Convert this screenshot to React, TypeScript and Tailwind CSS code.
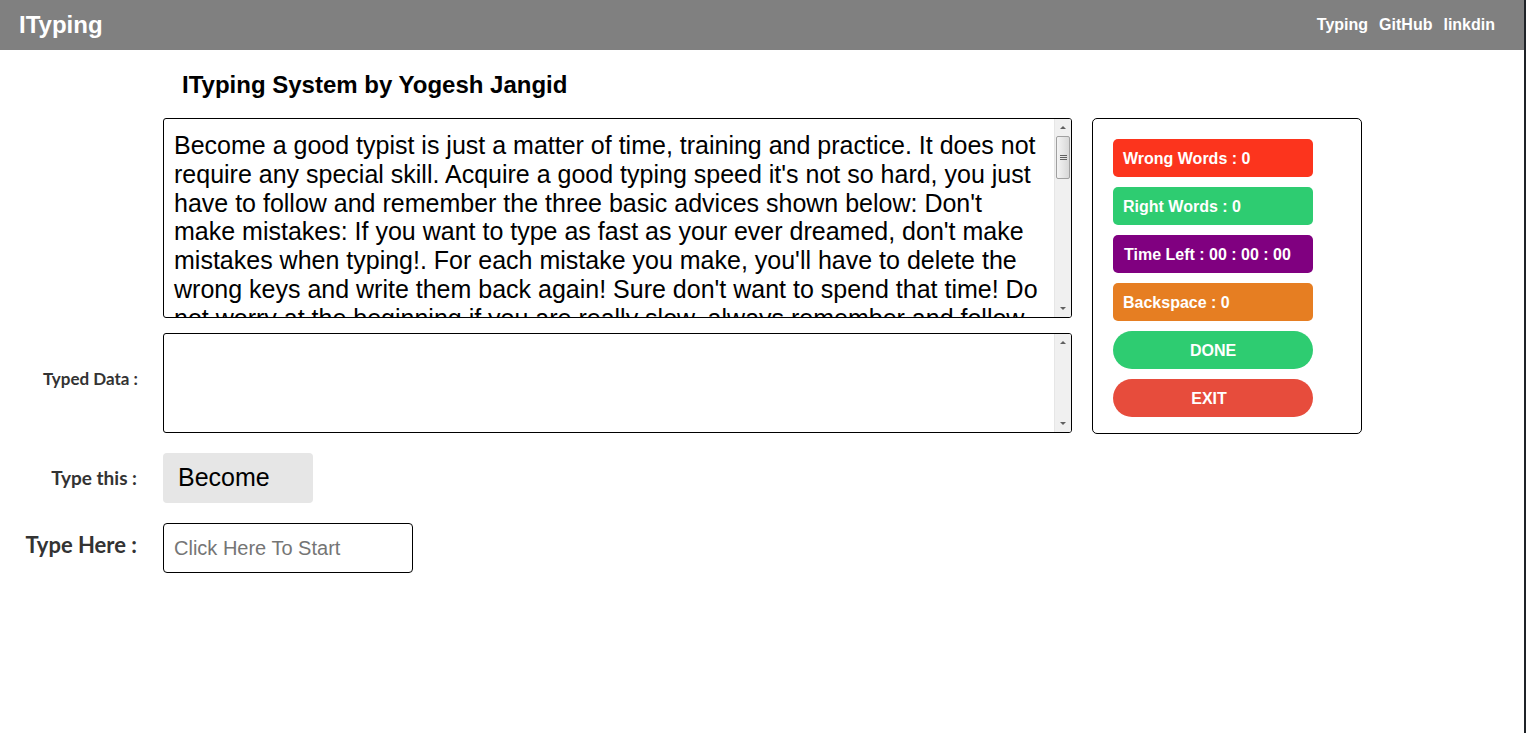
import React from "react";

const passage =
  "Become a good typist is just a matter of time, training and practice. It does not require any special skill. Acquire a good typing speed it's not so hard, you just have to follow and remember the three basic advices shown below: Don't make mistakes: If you want to type as fast as your ever dreamed, don't make mistakes when typing!. For each mistake you make, you'll have to delete the wrong keys and write them back again! Sure don't want to spend that time! Do not worry at the beginning if you are really slow, always remember and follow the rules.";

// old-style windows scrollbar, drawn by hand
const FakeScrollbar = ({ thumb }: { thumb: boolean }) => (
  <div className="flex flex-col w-[17px] h-full bg-[#f0f0f0] border-l border-[#e6e6e6]">
    <div className="h-[17px] flex items-center justify-center">
      <div className="w-0 h-0 border-l-[3px] border-r-[3px] border-b-[3px] border-l-transparent border-r-transparent border-b-[#606060]" />
    </div>
    {thumb && (
      <div className="mx-[1px] h-[43px] rounded-[2px] border border-[#a0a0a0] bg-gradient-to-r from-[#f4f4f4] to-[#d8d8d8] flex flex-col items-center justify-center gap-[1px]">
        <div className="w-[7px] h-[1px] bg-[#606060]" />
        <div className="w-[7px] h-[1px] bg-[#606060]" />
        <div className="w-[7px] h-[1px] bg-[#606060]" />
      </div>
    )}
    <div className="flex-1" />
    <div className="h-[17px] flex items-center justify-center">
      <div className="w-0 h-0 border-l-[3px] border-r-[3px] border-t-[3px] border-l-transparent border-r-transparent border-t-[#606060]" />
    </div>
  </div>
);

const stats = [
  { label: "Wrong Words : 0", bg: "bg-[#fc341d]", pad: "pl-[10px]" },
  { label: "Right Words : 0", bg: "bg-[#2ecc71]", pad: "pl-[10px]" },
  { label: "Time Left : 00 : 00 : 00", bg: "bg-[#800080]", pad: "pl-[11px]" },
  { label: "Backspace : 0", bg: "bg-[#e67e22]", pad: "pl-[10px]" },
];

export default function App() {
  return (
    <div className="min-h-[733px] bg-white border-r-2 border-[#1f2328] font-['Liberation_Sans',Arial,sans-serif]">
      {/* Header */}
      <header className="h-[50px] bg-[#808080] flex items-center justify-between pl-[19px] pr-[29px]">
        <span className="text-white font-bold text-[24px] leading-none">ITyping</span>
        <nav className="flex gap-[11px] text-white font-bold text-[16px]">
          <span>Typing</span>
          <span>GitHub</span>
          <span>linkdin</span>
        </nav>
      </header>

      <h1 className="pl-[182px] mt-[21px] text-[24px] font-bold text-black leading-[28px]">
        ITyping System by Yogesh Jangid
      </h1>

      <div className="flex mt-[19px] gap-[20px] pl-[163px]">
        <div className="flex flex-col gap-[15px]">
          {/* passage */}
          <div className="w-[909px] h-[200px] border border-black rounded-[3px] flex overflow-hidden">
            <div className="flex-1 pl-[10px] pr-[10px] pt-[12px] text-[25px] leading-[28.8px] text-black overflow-hidden">
              {passage}
            </div>
            <FakeScrollbar thumb />
          </div>
          {/* typed data */}
          <div className="relative">
            <span className="absolute right-[934px] top-[33px] whitespace-nowrap text-[17px] font-bold text-[#333] font-['Lato',sans-serif]">
              Typed Data :
            </span>
            <div className="w-[909px] h-[100px] border border-black rounded-[3px] flex overflow-hidden">
              <div className="flex-1" />
              <FakeScrollbar thumb={false} />
            </div>
          </div>
        </div>

        {/* stats panel */}
        <div className="w-[270px] h-[316px] border border-black rounded-[5px] pt-[20px] pl-[20px] flex flex-col gap-[10px]">
          {stats.map((s) => (
            <div
              key={s.label}
              className={`w-[200px] h-[38px] rounded-[5px] ${s.bg} ${s.pad} pt-[1px] flex items-center text-white font-bold text-[16px]`}
            >
              {s.label}
            </div>
          ))}
          <button className="w-[200px] h-[38px] rounded-[19px] bg-[#2ecc71] text-white font-bold text-[16px] pt-[1px]">
            DONE
          </button>
          <button className="w-[200px] h-[38px] rounded-[19px] bg-[#e74c3c] text-white font-bold text-[16px] pr-[8px] pt-[1px]">
            EXIT
          </button>
        </div>
      </div>

      {/* Type this */}
      <div className="flex items-center mt-[19px]">
        <span className="w-[137px] text-right text-[19px] font-bold text-[#333] font-['Lato',sans-serif]">Type this :</span>
        <div className="ml-[26px] w-[150px] h-[50px] rounded-[4px] bg-[#e6e6e6] flex items-center pl-[15px] text-[25px] text-black">
          Become
        </div>
      </div>

      {/* Type here */}
      <div className="flex items-center mt-[20px]">
        <span className="w-[137px] text-right text-[22px] font-bold text-[#333] font-['Lato',sans-serif] -mt-[8px]">Type Here :</span>
        <input
          className="ml-[26px] w-[250px] h-[50px] rounded-[4px] border border-black pl-[10px] text-[20px] placeholder:text-[#757575] outline-none"
          placeholder="Click Here To Start"
        />
      </div>
    </div>
  );
}
